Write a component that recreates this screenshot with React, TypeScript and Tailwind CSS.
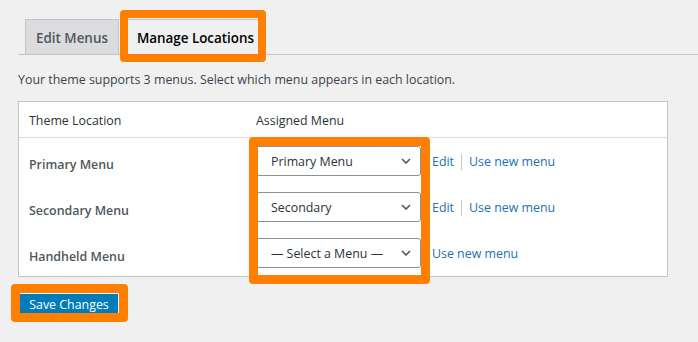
const rows = [
  { label: "Primary Menu", value: "Primary Menu", edit: true },
  { label: "Secondary Menu", value: "Secondary", edit: true },
  { label: "Handheld Menu", value: "— Select a Menu —", edit: false },
];

const Chevron = () => (
  <svg width="10" height="6" viewBox="0 0 10 6" className="shrink-0">
    <path d="M1 1l4 4 4-4" fill="none" stroke="#50575e" strokeWidth="1.6" />
  </svg>
);

const App: React.FC = () => {
  return (
    <div
      className="relative h-[342px] w-[698px] overflow-hidden bg-[#f0f0f1] pl-[18px] text-[12.4px] text-[#3c434a]"
      style={{ fontFamily: '"Open Sans", "Noto Sans", sans-serif' }}
    >
      {/* tabs */}
      <div className="flex items-end border-b border-[#c3c4c7] pt-[19px] pl-[7px]">
        <div className="-mb-px h-[36px] border border-[#c3c4c7] bg-[#dcdcde] px-[10px] pt-[6px] pb-[4px] text-[13.4px] leading-[24px] font-semibold text-[#50575e]">
          Edit Menus
        </div>
        <div className="-mb-px ml-[7px] h-[36px] border border-[#c3c4c7] border-b-[#f0f0f1] bg-[#f0f0f1] px-[10px] pt-[6px] pb-[4px] text-[13.4px] leading-[24px] font-semibold text-black">
          Manage Locations
        </div>
      </div>

      <p className="mt-[15px] mb-[11px] leading-[20px]">
        Your theme supports 3 menus. Select which menu appears in each location.
      </p>

      {/* locations table */}
      <div className="w-[650px] border border-[#c3c4c7] bg-white">
        <div className="flex h-[36px] items-center border-b border-[#dcdcde] pt-[3px] text-[#2c3338]">
          <div className="w-[237px] pl-[10px]">Theme Location</div>
          <div>Assigned Menu</div>
        </div>
        {rows.map((row, index) => (
          <div key={index} className="flex h-[46px] items-start">
            <div className="w-[237px] pt-[17px] pl-[10px] leading-[20px] font-semibold text-[#50575e]">
              {row.label}
            </div>
            <div className="flex items-center pt-[8px]">
              <div className="flex h-[30px] w-[165px] items-center justify-between rounded-[3px] border border-[#8c8f94] pr-[9px] pl-[14px] text-[#2c3338]">
                <span className="pt-[3px]">{row.value}</span>
                <Chevron />
              </div>
              <div className="ml-[11px] flex items-center pt-[3px] text-[#2271b1]">
                {row.edit && (
                  <>
                    <span>Edit</span>
                    <span className="mx-[7px] h-[16px] w-px bg-[#c3c4c7]" />
                  </>
                )}
                <span>Use new menu</span>
              </div>
            </div>
          </div>
        ))}
      </div>

      <div className="mt-[17px] ml-[2px] flex h-[20px] w-[98px] items-center justify-center bg-[#007cba] pt-[2px] text-white">
        Save Changes
      </div>

      {/* highlight annotations */}
      <div className="pointer-events-none absolute top-[10px] left-[120px] h-[52px] w-[146px] rounded-[4px] border-[8px] border-[#ff8000]" />
      <div className="pointer-events-none absolute top-[137px] left-[249px] h-[147px] w-[181px] rounded-[4px] border-[9px] border-[#ff8000]" />
      <div className="pointer-events-none absolute top-[284px] left-[11px] h-[38px] w-[117px] rounded-[4px] border-[9px] border-[#ff8000]" />
    </div>
  );
};

export default App;
